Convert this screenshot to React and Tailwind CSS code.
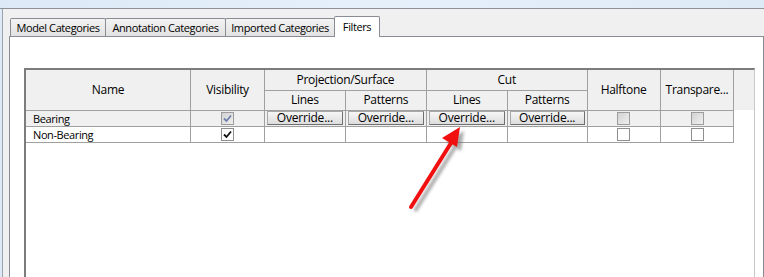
import React from 'react'

const font = { fontFamily: '"Open Sans", "Noto Sans", "Liberation Sans", sans-serif' }

function Tab({ label, active, w }) {
  if (active) {
    return (
      <div className={`${w} h-[21px] -mb-px relative z-10 bg-white border border-b-0 border-[#898c95] rounded-t-[2px] flex items-start justify-center pt-[2px] whitespace-nowrap`}>
        {label}
      </div>
    )
  }
  return (
    <div className={`${w} h-[18px] bg-gradient-to-b from-[#f3f3f3] to-[#e2e2e2] border border-b-0 border-[#898c95] rounded-t-[2px] flex items-center justify-center pt-[2px] whitespace-nowrap -mr-px`}>
      {label}
    </div>
  )
}

function OverrideButton() {
  return (
    <div className="mx-[2px] h-[14px] bg-gradient-to-b from-[#f6f6f6] to-[#dddddd] border border-[#a8a8a8] border-b-[#707070] border-r-[#707070] flex items-center justify-center leading-none text-[12px] tracking-[-0.2px]">
      Override...
    </div>
  )
}

function Check({ checked, disabled }) {
  return (
    <div
      className={`mx-auto w-[13px] h-[13px] border flex items-center justify-center ${
        disabled
          ? 'border-[#9c9c9c] bg-gradient-to-br from-[#d2d2d2] to-[#f0f0f0]'
          : 'border-[#8e8f8f] bg-white'
      }`}
    >
      {checked && (
        <svg width="9" height="9" viewBox="0 0 9 9">
          <path
            d="M1 4.5 L3.5 7 L8 1.5"
            fill="none"
            stroke={disabled ? '#6f80aa' : '#111'}
            strokeWidth="1.8"
          />
        </svg>
      )}
    </div>
  )
}

const cell = 'border border-[#a0a0a0] p-0 font-normal'

function Arrow() {
  return (
    <svg className="absolute left-0 top-0 pointer-events-none" width="764" height="277">
      <defs>
        <filter id="blur" x="-50%" y="-50%" width="200%" height="200%">
          <feGaussianBlur stdDeviation="1.6" />
        </filter>
      </defs>
      <g filter="url(#blur)" opacity="0.55" transform="translate(4 4)">
        <line x1="411" y1="207" x2="451" y2="143" stroke="#666" strokeWidth="4" />
        <polygon points="460,127 457,147 442,138" fill="#666" />
      </g>
      <line x1="411" y1="207" x2="451" y2="143" stroke="#f01010" strokeWidth="4" strokeLinecap="round" />
      <polygon points="460,127 457,147 442,138" fill="#f01010" />
    </svg>
  )
}

export default function App() {
  return (
    <div className="relative w-[764px] h-[277px] overflow-hidden bg-[#f0f0f0] text-[12px] tracking-[-0.3px] text-black" style={font}>
      <div className="h-[9px] bg-gradient-to-r from-[#dde9f7] via-[#e6f0fb] to-[#dfeaf7] border-b border-[#8f9196]" />
      <div className="flex h-[268px]">
        <div className="w-[3px] bg-[#dde9f7] border-r border-[#9aa3ae]" />
        <div className="flex-1 flex flex-col pl-[6px] pt-[7px]">
          <div className="flex items-end pl-[1px] text-[11px] tracking-[-0.4px]">
            <Tab label="Model Categories" w="w-[96px]" />
            <Tab label="Annotation Categories" w="w-[121px]" />
            <Tab label="Imported Categories" w="w-[110px]" />
            <Tab label="Filters" w="w-[46px]" active />
          </div>
          <div className="flex-1 bg-white border border-[#898c95] border-b-0 pl-[14px] pt-[31px]">
            <div className="w-[731px] h-full border-t-2 border-l-2 border-[#7c7c7c] border-r border-r-[#c8c8c8]">
              <table className="table-fixed border-collapse">
                <colgroup>
                  <col className="w-[165px]" />
                  <col className="w-[74px]" />
                  <col className="w-[81px]" />
                  <col className="w-[81px]" />
                  <col className="w-[81px]" />
                  <col className="w-[80px]" />
                  <col className="w-[73px]" />
                  <col className="w-[74px]" />
                  <col className="w-[20px]" />
                </colgroup>
                <thead className="bg-[#f0f0f0]">
                  <tr className="h-[20px]">
                    <th rowSpan={2} className={`${cell} border-t-0 border-l-0`}>Name</th>
                    <th rowSpan={2} className={`${cell} border-t-0`}>Visibility</th>
                    <th colSpan={2} className={`${cell} border-t-0`}>Projection/Surface</th>
                    <th colSpan={2} className={`${cell} border-t-0`}>Cut</th>
                    <th rowSpan={2} className={`${cell} border-t-0`}>Halftone</th>
                    <th rowSpan={2} className={`${cell} border-t-0 whitespace-nowrap`}>Transpare...</th>
                    <th rowSpan={2} className="p-0 border-0" />
                  </tr>
                  <tr className="h-[20px]">
                    <th className={cell}>Lines</th>
                    <th className={cell}>Patterns</th>
                    <th className={cell}>Lines</th>
                    <th className={cell}>Patterns</th>
                  </tr>
                </thead>
                <tbody className="text-[11px] tracking-[-0.4px]">
                  <tr className="h-[16px] bg-[#f0f0f0]">
                    <td className={`${cell} border-l-0 pl-[7px] leading-[15px]`}>Bearing</td>
                    <td className={cell}><Check checked disabled /></td>
                    <td className={cell}><OverrideButton /></td>
                    <td className={cell}><OverrideButton /></td>
                    <td className={cell}><OverrideButton /></td>
                    <td className={cell}><OverrideButton /></td>
                    <td className={cell}><Check disabled /></td>
                    <td className={cell}><Check disabled /></td>
                    <td className="p-0 border-0 bg-white" />
                  </tr>
                  <tr className="h-[16px]">
                    <td className={`${cell} border-l-0 pl-[7px] leading-[15px]`}>Non-Bearing</td>
                    <td className={cell}><Check checked /></td>
                    <td className={cell} />
                    <td className={cell} />
                    <td className={cell} />
                    <td className={cell} />
                    <td className={cell}><Check /></td>
                    <td className={cell}><Check /></td>
                    <td className="p-0 border-0" />
                  </tr>
                </tbody>
              </table>
            </div>
          </div>
        </div>
      </div>
      <Arrow />
    </div>
  )
}
